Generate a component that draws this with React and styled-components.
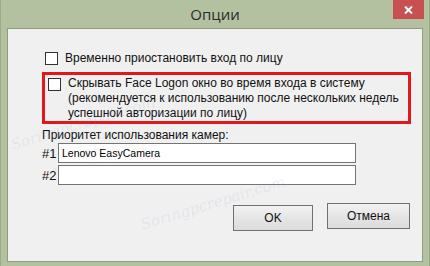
import React from "react";
import styled, { createGlobalStyle } from "styled-components";

const Global = createGlobalStyle`
  html, body { margin: 0; padding: 0; }
  body { font-family: "Liberation Sans", Arial, sans-serif; background: #b2c0a0; }
`;

const Window = styled.div`
  position: relative;
  width: 430px;
  height: 266px;
  box-sizing: border-box;
  background: #b3c1a1;
  border-left: 1px solid #9cab8c;
  border-right: 1px solid #9cab8c;
  display: flex;
  flex-direction: column;
  overflow: hidden;
`;

const TitleBar = styled.div`
  height: 28px;
  display: grid;
  grid-template-columns: 1fr auto 1fr;
  align-items: start;
`;

const Title = styled.div`
  grid-column: 2;
  font-family: "Open Sans", "Noto Sans", sans-serif;
  font-size: 15px;
  color: #2b2b2b;
  line-height: 20px;
  padding-top: 4px;
`;

const CloseButton = styled.div`
  grid-column: 3;
  justify-self: end;
  margin-right: 5px;
  width: 31px;
  height: 19px;
  background: #c75050;
  display: flex;
  align-items: center;
  justify-content: center;
`;

const Client = styled.div`
  position: relative;
  margin: 0 6px;
  height: 234px;
  box-sizing: border-box;
  border: 1px solid #8e9e7e;
  background: #f0f0f0;
  padding: 21px 11px 0 34px;
  font-size: 12px;
  color: #111;
  overflow: hidden;
`;

const CheckRow = styled.div`
  display: flex;
  align-items: flex-start;
  padding-left: 3px;
  line-height: ${(p) => p.$lh || 16}px;
  white-space: nowrap;
`;

const Box = styled.span`
  flex: none;
  width: 11px;
  height: 11px;
  border: 1px solid #333;
  background: #fff;
  margin-top: ${(p) => p.$top || 2}px;
  margin-right: 7px;
`;

const Highlight = styled.div`
  margin-top: 6px;
  width: 369px;
  height: 52px;
  box-sizing: border-box;
  border: 3px solid #e3161e;
  padding-top: 1px;
`;

const Lines = styled.div`
  display: flex;
  flex-direction: column;
`;

const Label = styled.div`
  margin-top: 4px;
  line-height: 14px;
`;

const CamRow = styled.div`
  display: flex;
  align-items: center;
  margin-top: ${(p) => p.$mt}px;
`;

const CamNum = styled.span`
  width: 16px;
  font-size: 13px;
`;

const Field = styled.div`
  width: 298px;
  height: 20px;
  box-sizing: border-box;
  border: 1px solid #747474;
  background: #fff;
  font-size: 10.5px;
  line-height: 18px;
  padding-left: 3px;
  color: #000;
`;

const Buttons = styled.div`
  display: flex;
  justify-content: flex-end;
  align-items: flex-start;
  gap: 14px;
  margin-top: 18px;
  padding-right: 1px;
`;

const Button = styled.div`
  width: ${(p) => p.$w}px;
  height: 26px;
  margin-top: ${(p) => p.$mt || 0}px;
  box-sizing: border-box;
  border: 1px solid #707070;
  background: linear-gradient(#f2f2f2, #e4e4e4 55%, #dcdcdc);
  display: flex;
  align-items: center;
  justify-content: center;
  font-size: 12px;
  color: #111;
`;

const Mark = styled.span`
  position: absolute;
  left: ${(p) => p.$x}px;
  top: ${(p) => p.$y}px;
  transform: rotate(-17deg);
  font-family: "DejaVu Serif", serif;
  font-style: italic;
  font-size: 15px;
  color: rgba(120, 140, 200, 0.13);
  white-space: nowrap;
  pointer-events: none;
`;

export default function App() {
  return (
    <>
      <Global />
      <Window>
        <TitleBar>
          <Title>Опции</Title>
          <CloseButton>
            <svg width="9" height="8" viewBox="0 0 9 8">
              <path d="M1 0.5 L8 7.5 M8 0.5 L1 7.5" stroke="#fff" strokeWidth="2" />
            </svg>
          </CloseButton>
        </TitleBar>
        <Client>
          <CheckRow>
            <Box />
            <span>Временно приостановить вход по лицу</span>
          </CheckRow>
          <Highlight>
            <CheckRow $lh={15}>
              <Box $top={0} />
              <Lines>
                <span>Скрывать Face Logon окно во время входа в систему</span>
                <span>(рекомендуется к использованию после нескольких недель</span>
                <span>успешной авторизации по лицу)</span>
              </Lines>
            </CheckRow>
          </Highlight>
          <Label>Приоритет использования камер:</Label>
          <CamRow $mt={1}>
            <CamNum>#1</CamNum>
            <Field>Lenovo EasyCamera</Field>
          </CamRow>
          <CamRow $mt={2}>
            <CamNum>#2</CamNum>
            <Field />
          </CamRow>
          <Buttons>
            <Button $w={80} $mt={2}>OK</Button>
            <Button $w={83}>Отмена</Button>
          </Buttons>
          <Mark $x={0} $y={85}>Soringpcrepair.com</Mark>
          <Mark $x={130} $y={165}>Soringpcrepair.com</Mark>
        </Client>
      </Window>
    </>
  );
}
